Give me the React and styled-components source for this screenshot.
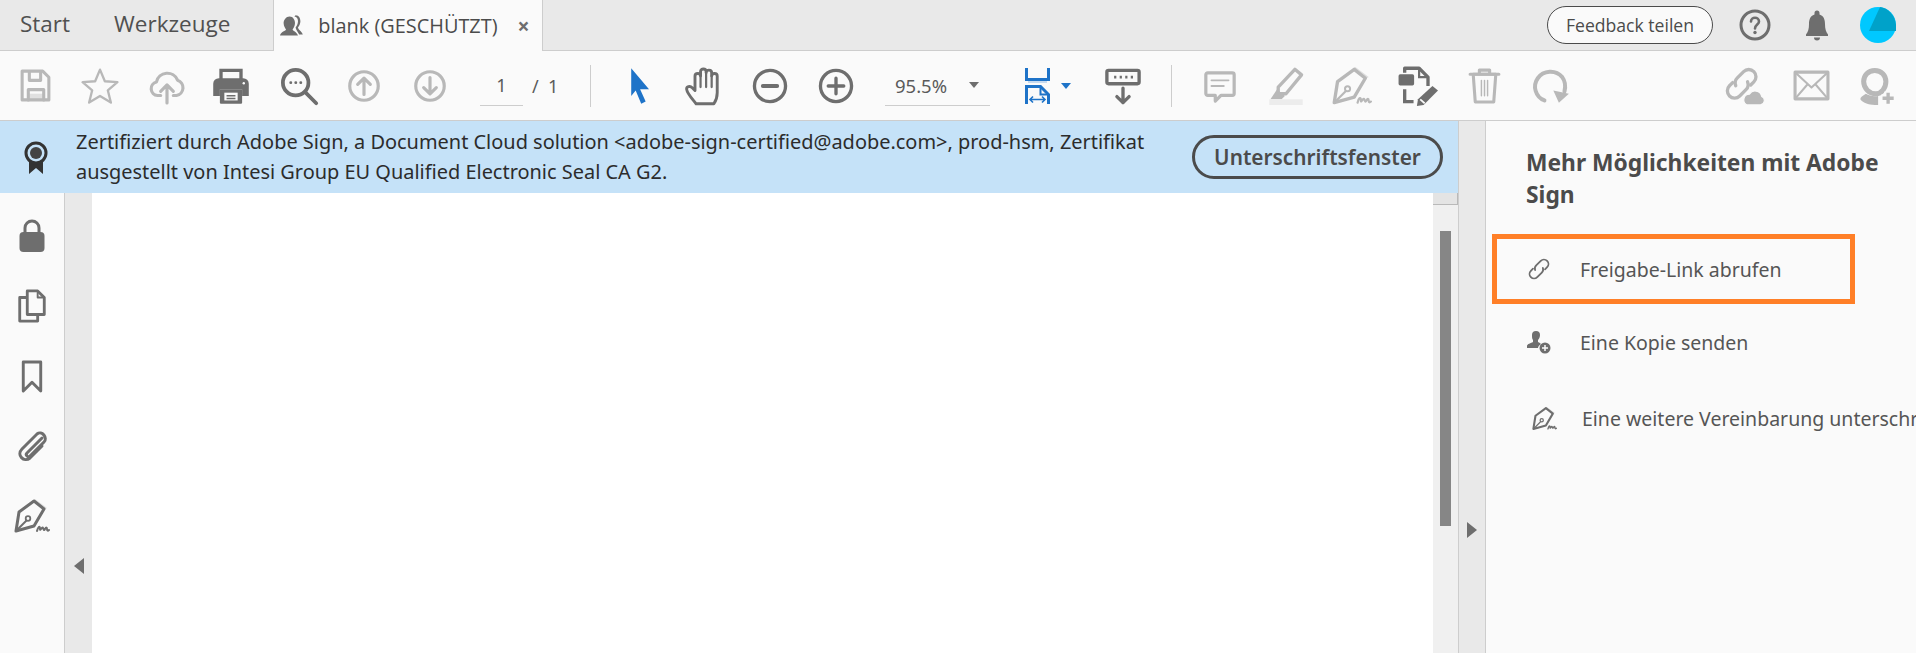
import React from 'react';
import styled, { createGlobalStyle } from 'styled-components';

const GRAY = '#6e6e6e';
const DIM = '#b8b8b8';
const BLUE = '#1e73c8';

const Global = createGlobalStyle`
  html, body { margin: 0; padding: 0; height: 100%; overflow: hidden; background: #fafafa; }
  #root { height: 100%; }
`;

const Page = styled.div`
  width: 1916px;
  height: 653px;
  display: flex;
  flex-direction: column;
  overflow: hidden;
  font-family: "Noto Sans", sans-serif;
  color: #4b4b4b;
`;

const TabBar = styled.div`
  height: 50px;
  flex: none;
  display: flex;
  align-items: stretch;
  background: #e9e9e9;
  border-bottom: 1px solid #cdcdcd;
`;

const NavTab = styled.div`
  font-family: "Open Sans", sans-serif;
  font-size: 22.5px;
  line-height: 48px;
  margin-left: ${p => p.$left}px;
  color: #505050;
`;

const ActiveTab = styled.div`
  width: 270px;
  height: 51px;
  margin-left: 43px;
  box-sizing: border-box;
  display: flex;
  align-items: center;
  padding-left: 6px;
  background: #fafafa;
  border-left: 1px solid #cdcdcd;
  border-right: 1px solid #cdcdcd;
  font-family: "Open Sans", sans-serif;
  font-size: 19.9px;
  color: #4b4b4b;
  svg { flex: none; }
`;

const TabTitle = styled.span`
  margin-left: 14px;
  white-space: nowrap;
`;

const TabClose = styled.span`
  margin-left: 20px;
  font-size: 21px;
  font-weight: 700;
  color: #6e6e6e;
`;

const TabRight = styled.div`
  margin-left: auto;
  display: flex;
  align-items: center;
  padding-right: 18px;
`;

const FeedbackButton = styled.div`
  width: 166px;
  height: 38px;
  box-sizing: border-box;
  border: 1.5px solid #4b4b4b;
  border-radius: 19px;
  background: #fafafa;
  display: flex;
  align-items: center;
  justify-content: center;
  font-family: "Open Sans", sans-serif;
  font-size: 17.6px;
  color: #4b4b4b;
`;

const Toolbar = styled.div`
  height: 69px;
  flex: none;
  display: flex;
  align-items: center;
  background: #fafafa;
  border-bottom: 1px solid #cdcdcd;
`;

const Tool = styled.div`
  width: 40px;
  height: 40px;
  flex: none;
  margin-left: ${p => p.$gap}px;
  display: flex;
  align-items: center;
  justify-content: center;
`;

const Separator = styled.div`
  width: 1px;
  height: 42px;
  flex: none;
  margin-left: ${p => p.$gap}px;
  background: #cdcdcd;
`;

const PageInput = styled.div`
  width: 43px;
  height: 40px;
  flex: none;
  margin-left: ${p => p.$gap}px;
  box-sizing: border-box;
  border-bottom: 1px solid #cdcdcd;
  text-align: center;
  font-size: 18px;
  line-height: 38px;
  color: #5a5a5a;
`;

const PageTotal = styled.div`
  margin-left: 9px;
  width: 47px;
  flex: none;
  font-size: 18px;
  color: #5a5a5a;
  white-space: pre;
`;

const ZoomSelect = styled.div`
  width: 105px;
  height: 40px;
  flex: none;
  margin-left: ${p => p.$gap}px;
  box-sizing: border-box;
  border-bottom: 1px solid #cdcdcd;
  display: flex;
  align-items: center;
  justify-content: space-between;
  padding: 0 11px 0 10px;
  font-size: 18.5px;
  color: #5a5a5a;
`;

const Caret = styled.span`
  width: 0;
  height: 0;
  flex: none;
  margin-left: ${p => p.$gap || 0}px;
  border-left: 5px solid transparent;
  border-right: 5px solid transparent;
  border-top: 6px solid ${p => p.$color};
`;

const Body = styled.div`
  flex: 1;
  display: flex;
  min-height: 0;
`;

const MainColumn = styled.div`
  width: 1458px;
  flex: none;
  display: flex;
  flex-direction: column;
`;

const Banner = styled.div`
  height: 72px;
  flex: none;
  display: flex;
  align-items: center;
  background: #c5e2f8;
`;

const BannerIcon = styled.div`
  width: 72px;
  margin-right: 4px;
  flex: none;
  display: flex;
  justify-content: center;
`;

const BannerText = styled.div`
  width: 1100px;
  flex: none;
  font-size: 19.95px;
  line-height: 30px;
  color: #2c2c2c;
`;

const OutlineButton = styled.div`
  margin-left: 16px;
  width: 251px;
  height: 44px;
  box-sizing: border-box;
  border: 3px solid #4b4b4b;
  border-radius: 22px;
  display: flex;
  align-items: center;
  justify-content: center;
  font-size: 20.8px;
  font-weight: 600;
  color: #4b4b4b;
`;

const Workspace = styled.div`
  flex: 1;
  display: flex;
  min-height: 0;
`;

const LeftRail = styled.div`
  width: 64px;
  flex: none;
  display: flex;
  flex-direction: column;
  align-items: center;
  padding-top: 25px;
  gap: 34px;
  background: #fafafa;
  border-right: 1px solid #cdcdcd;
  svg { display: block; }
`;

const RailIcon = styled.div`
  width: 36px;
  height: 36px;
  display: flex;
  align-items: center;
  justify-content: center;
`;

const Gutter = styled.div`
  width: 27px;
  flex: none;
  background: #e9e9e9;
  display: flex;
  align-items: center;
  justify-content: center;
  padding-top: 286px;
  box-sizing: border-box;
  ${p => p.$divided && 'border-left: 1px solid #cdcdcd;'}
`;

const Arrow = styled.span`
  width: 0;
  height: 0;
  border-top: 8px solid transparent;
  border-bottom: 8px solid transparent;
  ${p => (p.$dir === 'left' ? `border-right: 10px solid ${GRAY};` : `border-left: 10px solid ${GRAY};`)}
`;

const Sheet = styled.div`
  flex: 1;
  background: #fff;
`;

const ScrollTrack = styled.div`
  width: 25px;
  flex: none;
  background: #f0f0f0;
  display: flex;
  flex-direction: column;
  align-items: center;
`;

const ScrollCap = styled.div`
  width: 100%;
  height: 12px;
  flex: none;
  background: #e4e4e4;
  border-bottom: 1px solid #b9b9b9;
  border-right: 1px solid #b9b9b9;
  box-sizing: border-box;
`;

const ScrollThumb = styled.div`
  width: 11px;
  height: 295px;
  margin-top: 26px;
  flex: none;
  background: #868686;
`;

const SidePanel = styled.div`
  flex: 1;
  min-width: 0;
  overflow: hidden;
  background: #fafafa;
  border-left: 1px solid #cdcdcd;
  padding: 26px 0 0 40px;
  box-sizing: border-box;
`;

const PanelTitle = styled.div`
  width: 372px;
  font-size: 22.8px;
  font-weight: 700;
  line-height: 32px;
  color: #4b4b4b;
`;

const ActionList = styled.div`
  margin-top: 23px;
  margin-left: -34px;
`;

const Action = styled.div`
  height: 70px;
  width: 363px;
  box-sizing: border-box;
  display: flex;
  align-items: center;
  white-space: nowrap;
  font-size: 19.5px;
  color: #555;
  border: 5px solid ${p => (p.$highlight ? '#ff7f27' : 'transparent')};
  margin-bottom: ${p => p.$after}px;
  padding-left: ${p => p.$pad}px;
  svg { flex: none; margin-right: ${p => p.$iconGap}px; }
`;

const Svg = ({ s = 40, children, c = GRAY, w = 3 }) => (
  <svg width={s} height={s} viewBox="0 0 36 36" fill="none" stroke={c} strokeWidth={w} strokeLinecap="round" strokeLinejoin="round">
    {children}
  </svg>
);

const SaveIcon = () => (
  <Svg c={DIM} s={37}>
    <path d="M5 4h20l6 6v22H5z" />
    <path d="M12 5v8h11V5M11 32V22h15v10" />
    <path d="M11.500 26h14v6h-14z" fill={DIM} fillOpacity=".4" stroke="none" />
  </Svg>
);
const StarIcon = () => (
  <Svg c={DIM} w={2.2} s={38}>
    <path d="M18 2.500l4.600 11 11.900.900-9.100 7.700 2.900 11.600L18 27.400 7.700 33.700l2.900-11.600-9.100-7.700 11.900-.900z" />
  </Svg>
);
const CloudUpIcon = () => (
  <Svg c={DIM} s={38}>
    <path d="M12 27H9a6.500 6.500 0 0 1-1-12.800A10.500 10.500 0 0 1 28 12.500 7.500 7.500 0 0 1 27 27h-3" />
    <path d="M18 34V17M12 23l6-6 6 6" />
  </Svg>
);
const PrintIcon = () => (
  <svg width="40" height="40" viewBox="0 0 36 36">
    <path d="M9 4h18v10H9z" fill="none" stroke={GRAY} strokeWidth="3" />
    <path d="M7 11h22a5 5 0 0 1 5 5v11h-6v-6H8v6H2V16a5 5 0 0 1 5-5z" fill={GRAY} />
    <path d="M8 21h20v12a1 1 0 0 1-1 1H9a1 1 0 0 1-1-1z" fill={GRAY} />
    <path d="M12 24h12v7H12z" fill="#fafafa" />
    <path d="M14 26h8v1.400h-8zM14 28.500h8v1.400h-8z" fill={GRAY} />
    <circle cx="29.500" cy="15.500" r="1.100" fill="#fafafa" />
  </svg>
);
const SearchIcon = () => (
  <Svg w={3.4}>
    <circle cx="15" cy="15" r="11.500" />
    <path d="M24 24l9.500 9.500" />
    <path d="M10.500 15h.2M15 15h.2M19.500 15h.2" strokeWidth="2.400" />
  </Svg>
);
const CircleArrow = ({ up }) => (
  <Svg c={DIM} s={38}>
    <circle cx="18" cy="18" r="13.500" />
    {up ? <path d="M18 26V11M12 16.500L18 10.500l6 6" /> : <path d="M18 10v15M12 19.500l6 6 6-6" />}
  </Svg>
);
const CursorIcon = () => (
  <svg width="40" height="40" viewBox="0 0 36 36">
    <path d="M11 2l16 19h-8l5 11-4 2-5-12-4 5z" fill={BLUE} />
  </svg>
);
const HandIcon = () => (
  <Svg w={2.600}>
    <path d="M10 34C7 30 2 25 1.500 21c-.3-2.500 3-3.500 5-1.500L9 22V9c0-3 5-3 5 0V5c0-3 5-3 5 0v1c0-3 5-3 5 0v3c0-3 5-3 5 0v15c0 4-1 7-3 10z" />
    <path d="M14 9v10M19 6v13M24 9v10" strokeWidth="2" />
  </Svg>
);
const MinusIcon = () => (
  <Svg>
    <circle cx="18" cy="18" r="14" />
    <path d="M11.500 18h13" strokeWidth="3.400" />
  </Svg>
);
const PlusIcon = () => (
  <Svg>
    <circle cx="18" cy="18" r="14" />
    <path d="M11 18h14M18 11v14" />
  </Svg>
);
const FitIcon = () => (
  <svg width="25" height="36" viewBox="0 0 25 36" fill="none" stroke={BLUE} strokeWidth="3">
    <path d="M1.500 0v11.500h22V0" />
    <path d="M1.500 36V18.500h14l8 8V36" />
    <path d="M15.500 18.500v8h8" strokeWidth="2" />
    <path d="M5 31.500h15M8 28.500l-3 3 3 3M17 28.500l3 3-3 3" strokeWidth="1.600" />
    <path d="M3 14h19" stroke="#c5daf0" strokeWidth="2" />
  </svg>
);
const KeyboardDownIcon = () => (
  <svg width="40" height="40" viewBox="0 0 36 36" fill="none">
    <rect x="3.500" y="4" width="29" height="12" rx="1.500" stroke={GRAY} strokeWidth="3" />
    <path d="M10 10h2M15 10h2M20 10h2M25 10h2" stroke={GRAY} strokeWidth="2.600" />
    <path d="M18 20v13M12.500 27.500l5.500 5.500 5.500-5.500" stroke={GRAY} strokeWidth="3" strokeLinecap="round" strokeLinejoin="round" />
  </svg>
);
const CommentIcon = () => (
  <Svg c={DIM} s={34} w={3.400}>
    <path d="M5 4h26a2 2 0 0 1 2 2v20a2 2 0 0 1-2 2H19l-6 6v-6H5a2 2 0 0 1-2-2V6a2 2 0 0 1 2-2z" />
    <path d="M9 12h18M9 18h13" strokeWidth="2" />
  </Svg>
);
const HighlightIcon = () => (
  <svg width="40" height="40" viewBox="0 0 36 36">
    <path d="M26 3l6 5-14 17h-7v-6z" fill="none" stroke={DIM} strokeWidth="3" strokeLinejoin="round" />
    <path d="M10 21l7 6-3 3H4z" fill={DIM} />
    <path d="M3 30h30v5H3z" fill="#ececec" />
  </svg>
);
const PenSignIcon = ({ c = DIM, s = 40 }) => (
  <svg width={s} height={s} viewBox="0 0 36 36" fill="none">
    <path d="M21 1l12 9-3 2-11-9z" fill="#dddddd" />
    <path d="M20 3L5 14 2 33l18-5 10-17z" stroke={c} strokeWidth="3" strokeLinejoin="round" />
    <path d="M2 33l10.500-10.500" stroke={c} strokeWidth="2" />
    <circle cx="14" cy="20.500" r="2.300" stroke={c} strokeWidth="1.800" />
    <path d="M23 33c1-4 3-6 3-2 0 3 2-3 3-1s1 3 2 1c1-2 2-2 2 0s1 2 2 1" stroke={c} strokeWidth="2" strokeLinecap="round" />
  </svg>
);
const EditFileIcon = () => (
  <svg width="40" height="40" viewBox="0 0 36 36" fill="none" stroke={GRAY} strokeWidth="3">
    <path d="M2 9h11v7H2z" fill={GRAY} strokeLinejoin="round" />
    <path d="M6 6V2h13l8 8v8" strokeLinejoin="round" />
    <path d="M19 2v8h8" strokeWidth="2" />
    <path d="M6 21v11h8" />
    <path d="M31 18l5 4-13 13-6 1 1-6z" fill={GRAY} stroke="none" />
    <path d="M20 30l4 3.500" stroke="#fafafa" strokeWidth="1.600" />
  </svg>
);
const TrashIcon = () => (
  <Svg c={DIM} s={37}>
    <path d="M4 7h28M13 7V3h10v4" />
    <path d="M7 7l2 27h18l2-27z" />
    <path d="M15 13v15M18 13v15M21 13v15" strokeWidth="1.400" />
  </Svg>
);
const RedoIcon = () => (
  <svg width="40" height="40" viewBox="0 0 36 36" fill="none">
    <path d="M13 31C5 28 2 18 7 11s16-8 22-1c3 4 3 9 2 13" stroke={DIM} strokeWidth="3.600" strokeLinecap="round" />
    <path d="M21 22l14 3-9 8z" fill={DIM} />
  </svg>
);
const LinkCloudIcon = () => (
  <svg width="40" height="40" viewBox="0 0 36 36" fill="none">
    <g transform="rotate(-45 15 16)" stroke={DIM} strokeWidth="3" strokeLinecap="round">
      <path d="M10 9.500H6a6.500 6.500 0 0 0 0 13h8a6.500 6.500 0 0 0 6-4" />
      <path d="M20 22.500h4a6.500 6.500 0 0 0 0-13h-8a6.500 6.500 0 0 0-6 4" />
    </g>
    <path d="M20 35h12a4 4 0 0 0 1-7.600 6 6 0 0 0-11-2A5 5 0 0 0 20 35z" fill={DIM} stroke="#fafafa" strokeWidth="1" />
  </svg>
);
const MailIcon = () => (
  <Svg c={DIM} s={37}>
    <path d="M2 5h32v26H2z" />
    <path d="M2 5l16 15L34 5M2 31l12-14M34 31L22 17" strokeWidth="2" />
  </Svg>
);
const AddUserIcon = () => (
  <svg width="40" height="40" viewBox="0 0 36 36" fill="none">
    <path d="M16 4c6 0 10 4.500 10 10 0 6-4 11-9 11-6 0-11-5-11-11C6 8.500 10 4 16 4z" stroke={DIM} strokeWidth="4.500" />
    <path d="M8 25c-3 2-5 3-5 5 2 3 7 5 13 5h3v-8c-4 .500-8 0-11-2z" fill={DIM} />
    <path d="M28 23v12M22 29h12" stroke="#fafafa" strokeWidth="7" />
    <path d="M28 24v10M23 29h10" stroke={DIM} strokeWidth="3" />
  </svg>
);
const HelpIcon = () => (
  <svg width="32" height="32" viewBox="0 0 32 32" fill="none">
    <circle cx="16" cy="16" r="14" stroke={GRAY} strokeWidth="3" />
    <path d="M12 12.500c0-5 8-5 8 0 0 3-4 3-4 7" stroke={GRAY} strokeWidth="2.600" strokeLinecap="round" />
    <circle cx="16" cy="23.500" r="1.700" fill={GRAY} />
  </svg>
);
const BellIcon = () => (
  <svg width="26" height="32" viewBox="0 0 24 32">
    <path d="M12 1.500a2.500 2.500 0 0 1 2.500 2.500v1.500C19 7 20 11 20 15c0 5 1 8 3 10.500v1.500H1v-1.500C3 23 4 20 4 15c0-4 1-8 5.500-9.500V4A2.500 2.500 0 0 1 12 1.500z" fill={GRAY} />
    <path d="M9 28.500h6a3 3 0 0 1-6 0z" fill={GRAY} />
  </svg>
);
const AvatarIcon = () => (
  <svg width="36" height="36" viewBox="0 0 36 36">
    <circle cx="18" cy="18" r="18" fill="#00c8ff" />
    <path d="M20 0c8 1 15 8 16 18v6H9z" fill="#00a2c9" />
  </svg>
);
const TabUsersIcon = () => (
  <svg width="24" height="24" viewBox="0 0 20 20">
    <path d="M13 1c3 0 4 3 4 5s-1 4-2 5c0 2 3 3 4 6H16c-1-2-3-4-3-6 1-1 2-3 2-5s-1-4-3-4z" fill={GRAY} />
    <path d="M8 2c3 0 4.500 3 4.500 5.500S11 12 10.500 13c0 1 3.500 2 4.500 5H0c.5-3 5-4 5-5-.5-1-2-3-2-5.500S5 2 8 2z" fill={GRAY} />
  </svg>
);
const RibbonIcon = () => (
  <svg width="24" height="33" viewBox="0 0 24 33" fill="none">
    <path d="M5 19v14l7-6 7 6V19z" fill="#333" />
    <circle cx="12" cy="12" r="10" fill="#c5e2f8" stroke="#333" strokeWidth="3" />
    <circle cx="12" cy="12" r="6" fill="#444" />
  </svg>
);
const LockIcon = () => (
  <svg width="26" height="34" viewBox="0 0 26 34" fill="none">
    <path d="M6 15V9a7 7 0 0 1 14 0v6" stroke={GRAY} strokeWidth="3" />
    <rect x="0.500" y="13" width="25" height="20" rx="4" fill={GRAY} />
  </svg>
);
const PagesIcon = () => (
  <svg width="30" height="34" viewBox="0 0 30 36" fill="none" stroke={GRAY} strokeWidth="3" strokeLinejoin="round">
    <path d="M9 9H2v25h19v-7" />
    <path d="M10 2h11l7 7v18H10z" />
    <path d="M21 2v7h7" strokeWidth="2" />
  </svg>
);
const BookmarkIcon = () => (
  <svg width="22" height="33" viewBox="0 0 22 34" fill="none" stroke={GRAY} strokeWidth="3" strokeLinejoin="round">
    <path d="M2 2h18v30l-9-9-9 9z" />
  </svg>
);
const ClipIcon = () => (
  <svg width="30" height="32" viewBox="0 0 30 32" fill="none" stroke={GRAY} strokeWidth="3" strokeLinecap="round">
    <path d="M25 8L10 23c-2 2 1 5 3 3L27 12c4-4-2-12-7-8L5 19c-6 6 2 14 8 9l12-12" />
  </svg>
);
const ChainIcon = () => (
  <svg width="24" height="24" viewBox="0 0 24 24" fill="none">
    <g transform="rotate(-45 12 12)" stroke={GRAY} strokeWidth="1.800" strokeLinecap="round">
      <path d="M8 7.500H5a4.500 4.500 0 0 0 0 9h6.500a4.500 4.500 0 0 0 4-2.500" />
      <path d="M16 16.500h3a4.500 4.500 0 0 0 0-9h-6.500a4.500 4.500 0 0 0-4 2.500" />
    </g>
  </svg>
);
const SendCopyIcon = () => (
  <svg width="24" height="24" viewBox="0 0 24 24">
    <path d="M9 1a4 4 0 0 1 4 4c0 2-1 4-2 5v2c1 .500 2 1 3 2-2 1-3 3-3 4H0v-2c0-2 4-3 6-4v-2C5 9 5 7 5 5a4 4 0 0 1 4-4z" fill={GRAY} />
    <circle cx="18" cy="18" r="5.500" fill={GRAY} />
    <path d="M15 18h6M18 15v6" stroke="#fafafa" strokeWidth="1.500" />
  </svg>
);

export default function App() {
  return (
    <Page>
      <Global />
      <TabBar>
        <NavTab $left={20}>Start</NavTab>
        <NavTab $left={44}>Werkzeuge</NavTab>
        <ActiveTab>
          <TabUsersIcon />
          <TabTitle>blank (GESCHÜTZT)</TabTitle>
          <TabClose>×</TabClose>
        </ActiveTab>
        <TabRight>
          <FeedbackButton>Feedback teilen</FeedbackButton>
          <Tool $gap={22}><HelpIcon /></Tool>
          <Tool $gap={22}><BellIcon /></Tool>
          <Tool $gap={21}><AvatarIcon /></Tool>
        </TabRight>
      </TabBar>
      <Toolbar>
        <Tool $gap={15}><SaveIcon /></Tool>
        <Tool $gap={25}><StarIcon /></Tool>
        <Tool $gap={27}><CloudUpIcon /></Tool>
        <Tool $gap={24}><PrintIcon /></Tool>
        <Tool $gap={28}><SearchIcon /></Tool>
        <Tool $gap={25}><CircleArrow up /></Tool>
        <Tool $gap={26}><CircleArrow /></Tool>
        <PageInput $gap={30}>1</PageInput>
        <PageTotal>/  1</PageTotal>
        <Separator $gap={11} />
        <Tool $gap={28}><CursorIcon /></Tool>
        <Tool $gap={26}><HandIcon /></Tool>
        <Tool $gap={25}><MinusIcon /></Tool>
        <Tool $gap={26}><PlusIcon /></Tool>
        <ZoomSelect $gap={29}>95.5%<Caret $color={GRAY} /></ZoomSelect>
        <Tool $gap={27}><FitIcon /></Tool>
        <Caret $color={BLUE} $gap={4} />
        <Tool $gap={32}><KeyboardDownIcon /></Tool>
        <Separator $gap={28} />
        <Tool $gap={28}><CommentIcon /></Tool>
        <Tool $gap={26}><HighlightIcon /></Tool>
        <Tool $gap={26}><PenSignIcon /></Tool>
        <Tool $gap={26}><EditFileIcon /></Tool>
        <Tool $gap={26}><TrashIcon /></Tool>
        <Tool $gap={26}><RedoIcon /></Tool>
        <Tool $gap={155}><LinkCloudIcon /></Tool>
        <Tool $gap={26}><MailIcon /></Tool>
        <Tool $gap={26}><AddUserIcon /></Tool>
      </Toolbar>
      <Body>
        <MainColumn>
          <Banner>
            <BannerIcon><RibbonIcon /></BannerIcon>
            <BannerText>
              Zertifiziert durch Adobe Sign, a Document Cloud solution &lt;adobe-sign-certified@adobe.com&gt;, prod-hsm, Zertifikat
              ausgestellt von Intesi Group EU Qualified Electronic Seal CA G2.
            </BannerText>
            <OutlineButton>Unterschriftsfenster</OutlineButton>
          </Banner>
          <Workspace>
            <LeftRail>
              <RailIcon><LockIcon /></RailIcon>
              <RailIcon><PagesIcon /></RailIcon>
              <RailIcon><BookmarkIcon /></RailIcon>
              <RailIcon><ClipIcon /></RailIcon>
              <RailIcon><PenSignIcon c={GRAY} s={36} /></RailIcon>
            </LeftRail>
            <Gutter><Arrow $dir="left" /></Gutter>
            <Sheet />
            <ScrollTrack>
              <ScrollCap />
              <ScrollThumb />
            </ScrollTrack>
          </Workspace>
        </MainColumn>
        <Gutter $divided><Arrow $dir="right" /></Gutter>
        <SidePanel>
          <PanelTitle>Mehr Möglichkeiten mit Adobe Sign</PanelTitle>
          <ActionList>
            <Action $highlight $pad={30} $iconGap={29} $after={3}><ChainIcon />Freigabe-Link abrufen</Action>
            <Action $pad={30} $iconGap={29} $after={6}><SendCopyIcon />Eine Kopie senden</Action>
            <Action $pad={35} $iconGap={25} $after={0}><PenSignIcon c={GRAY} s={25} />Eine weitere Vereinbarung unterschreiben</Action>
          </ActionList>
        </SidePanel>
      </Body>
    </Page>
  );
}
